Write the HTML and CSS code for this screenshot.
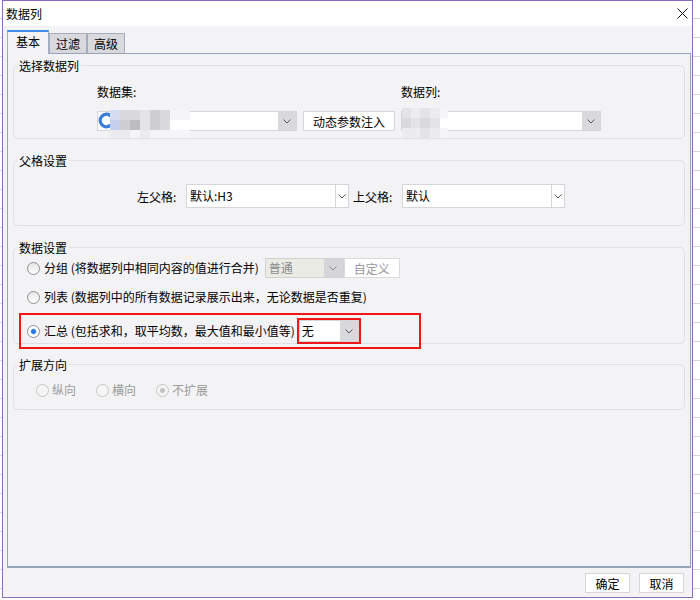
FILE: index.html
```html
<!DOCTYPE html>
<html lang="zh">
<head>
    <meta charset="UTF-8">
    <title>数据列</title>
    <link rel="stylesheet" href="styles.css">
</head>
<body>
    <div class="dialog">
        <div class="titlebar">
            <span class="title">数据列</span>
            <svg class="close" width="11" height="11" viewBox="0 0 11 11"><path d="M0.5 0.5 L10.5 10.5 M10.5 0.5 L0.5 10.5" stroke="#111" stroke-width="1" fill="none"/></svg>
        </div>

        <div class="dialog-body">
            <div class="tabs">
                <span class="tab tab-active">基本</span>
                <span class="tab">过滤</span>
                <span class="tab">高级</span>
            </div>

            <div class="panel">
                <!-- 选择数据列 -->
                <div class="group group-first">
                    <div class="group-title">选择数据列</div>
                    <div class="ds-fields">
                        <div class="ds-col ds-col-main">
                            <div class="field-label">数据集:</div>
                            <div class="field-row">
                                <div class="combo combo-ds">
                                    <svg class="ds-icon" width="13" height="17" viewBox="0 0 13 17"><path d="M12.6 3.9 A6.2 6.2 0 1 0 12.6 13.1" stroke="#3b7ddd" stroke-width="3.4" fill="none"/></svg>
                                    <span class="mosaic mosaic-ds">
                                        <i class="px-a"></i><i class="px-c"></i><i class="px-c"></i><i class="px-e"></i><i class="px-i"></i><i class="px-c"></i><i class="px-f"></i><i class="px-f"></i>
                                        <i class="px-b"></i><i class="px-i"></i><i class="px-d"></i><i class="px-e"></i><i class="px-i"></i><i class="px-c"></i><i class="px-g"></i><i class="px-g"></i>
                                        <i class="px-h"></i><i class="px-h"></i><i class="px-f"></i><i class="px-h"></i><i class="px-f"></i><i class="px-f"></i><i class="px-f"></i><i class="px-f"></i>
                                    </span>
                                    <span class="combo-text"></span>
                                    <span class="combo-arrow"><svg width="8" height="5" viewBox="0 0 8 5"><path d="M0.5 0.5 L4 4 L7.5 0.5" stroke="#555" fill="none"/></svg></span>
                                </div>
                                <button class="btn btn-param">动态参数注入</button>
                            </div>
                        </div>
                        <div class="ds-col">
                            <div class="field-label">数据列:</div>
                            <div class="combo combo-ds">
                                <span class="mosaic mosaic-col">
                                    <i class="px-e"></i><i class="px-h"></i><i class="px-e"></i><i class="px-h"></i><i class="px-f"></i>
                                    <i class="px-c"></i><i class="px-e"></i><i class="px-c"></i><i class="px-e"></i><i class="px-g"></i>
                                    <i class="px-h"></i><i class="px-h"></i><i class="px-e"></i><i class="px-h"></i><i class="px-f"></i>
                                </span>
                                <span class="combo-text"></span>
                                <span class="combo-arrow"><svg width="8" height="5" viewBox="0 0 8 5"><path d="M0.5 0.5 L4 4 L7.5 0.5" stroke="#555" fill="none"/></svg></span>
                            </div>
                        </div>
                    </div>
                </div>

                <!-- 父格设置 -->
                <div class="group group-next">
                    <div class="group-title">父格设置</div>
                    <div class="parent-row">
                        <span class="parent-label">左父格:</span>
                        <div class="combo combo-parent">
                            <span class="combo-text">默认:H3</span>
                            <span class="combo-arrow arrow-plain"><svg width="8" height="5" viewBox="0 0 8 5"><path d="M0.5 0.5 L4 4 L7.5 0.5" stroke="#555" fill="none"/></svg></span>
                        </div>
                        <span class="parent-label parent-label-second">上父格:</span>
                        <div class="combo combo-parent">
                            <span class="combo-text">默认</span>
                            <span class="combo-arrow arrow-plain"><svg width="8" height="5" viewBox="0 0 8 5"><path d="M0.5 0.5 L4 4 L7.5 0.5" stroke="#555" fill="none"/></svg></span>
                        </div>
                    </div>
                </div>

                <!-- 数据设置 -->
                <div class="group group-next">
                    <div class="group-title">数据设置</div>
                    <div class="opt opt-group">
                        <span class="radio"></span>
                        <span class="opt-text">分组 (将数据列中相同内容的值进行合并)</span>
                        <div class="combo combo-mode">
                            <span class="combo-text">普通</span>
                            <span class="combo-arrow"><svg width="8" height="5" viewBox="0 0 8 5"><path d="M0.5 0.5 L4 4 L7.5 0.5" stroke="#888" fill="none"/></svg></span>
                        </div>
                        <button class="btn btn-custom">自定义</button>
                    </div>
                    <div class="opt opt-list">
                        <span class="radio"></span>
                        <span class="opt-text">列表 (数据列中的所有数据记录展示出来，无论数据是否重复)</span>
                    </div>
                    <div class="opt opt-sum">
                        <span class="radio radio-on"></span>
                        <span class="opt-text">汇总 (包括求和，取平均数，最大值和最小值等)</span>
                        <div class="sum-mark">
                            <div class="combo combo-sum">
                                <span class="combo-text">无</span>
                                <span class="combo-arrow"><svg width="8" height="5" viewBox="0 0 8 5"><path d="M0.5 0.5 L4 4 L7.5 0.5" stroke="#555" fill="none"/></svg></span>
                            </div>
                        </div>
                    </div>
                </div>

                <!-- 扩展方向 -->
                <div class="group group-last">
                    <div class="group-title">扩展方向</div>
                    <div class="ext-row">
                        <span class="ext-item"><span class="radio radio-dis"></span>纵向</span>
                        <span class="ext-item"><span class="radio radio-dis"></span>横向</span>
                        <span class="ext-item"><span class="radio radio-dis radio-dis-on"></span>不扩展</span>
                    </div>
                </div>
            </div>

            <div class="footer">
                <button class="btn btn-foot">确定</button>
                <button class="btn btn-foot">取消</button>
            </div>
        </div>
    </div>
</body>
</html>
```

FILE: styles.css
```css
/* General */
* {
    box-sizing: border-box;
}

body {
    margin: 0;
    font-family: "Noto Sans CJK SC", "Microsoft YaHei", sans-serif;
    font-size: 12px;
    color: #000;
    background: #fff repeating-linear-gradient(to bottom, #fff 0 18px, #d6d6d6 18px 19px);
}

.dialog {
    margin-left: 2px;
    width: 691px;
    height: 598px;
    border: 1px solid #8a6cbd;  /* purple frame */
    background-color: #f3f3f6;
    display: flex;
    flex-direction: column;
}

/* Title bar */
.titlebar {
    height: 25px;
    flex: none;
    background-color: #fff;
    display: flex;
    align-items: center;
    justify-content: space-between;
    padding: 0 4px 0 3px;
}

.title {
    line-height: 16px;
}

/* Body and tabs */
.dialog-body {
    flex: 1;
    padding: 4px 0 0 4px;
}

.tabs {
    display: flex;
    align-items: flex-end;
    height: 23px;
    position: relative;
    z-index: 1;
}

.tab {
    height: 20px;
    padding: 0 6px;
    border: 1px solid #a3adbf;
    border-bottom: none;
    background-color: #d8d8dd;
    line-height: 19px;
}

.tab-active {
    height: 24px;
    margin-bottom: -1px;
    padding: 0 8px;
    border-top: 2px solid #3d8bea;  /* blue marker */
    background-color: #f3f3f6;
    line-height: 20px;
}

.panel {
    width: 684px;
    height: 515px;
    border: 1px solid #95a4b8;
    border-bottom-width: 2px;
    background-color: #f3f3f6;
    padding: 0 5px;
}

/* Group boxes */
.group {
    border: 1px solid #dfdfe4;
    border-radius: 5px;
}

.group-first {
    margin-top: 11px;
}

.group-next {
    margin-top: 21px;
}

.group-last {
    margin-top: 20px;
}

.group-title {
    width: fit-content;
    margin: -7px 0 0 3px;
    padding: 0 2px;
    line-height: 14px;
    background-color: #f3f3f6;
}

/* Combo boxes */
.combo {
    position: relative;
    display: flex;
    height: 20px;
    background-color: #fff;
    border: 1px solid #d6d6da;
}

.combo-text {
    flex: 1;
    padding-left: 3px;
    line-height: 18px;
    white-space: nowrap;
}

.combo-arrow {
    width: 18px;
    flex: none;
    background-color: #d9d9dd;
    display: flex;
    align-items: center;
    justify-content: center;
}

.arrow-plain {
    width: 13px;
    background-color: #fff;
    border-left: 1px solid #d6d6da;
}

.btn {
    font: inherit;
    color: #000;
    height: 20px;
    padding: 0;
    background-color: #fff;
    border: 1px solid #d6d6da;
    border-radius: 0;
}

/* 选择数据列 */
.ds-fields {
    display: flex;
    margin-top: 12px;
    padding: 0 0 7px 83px;
}

.ds-col {
    display: flex;
    flex-direction: column;
    gap: 12px;
}

.ds-col-main {
    width: 304px;
}

.field-label {
    line-height: 14px;
}

.field-row {
    display: flex;
}

.combo-ds {
    width: 200px;
}

.btn-param {
    width: 92px;
    margin-left: 6px;
}

.ds-icon {
    position: absolute;
    left: 0;
    top: 0;
}

/* blurred values */
.mosaic {
    position: absolute;
    display: grid;
    grid-template-rows: 10px 10px 8px;
}

.mosaic-ds {
    left: 12px;
    top: -2px;
    grid-template-columns: repeat(8, 10px);
}

.mosaic-col {
    left: 0;
    top: -4px;
    grid-template-rows: 10px 10px 10px;
    grid-template-columns: 9px 9px 10px 10px 8px;
}

.mosaic i { display: block; }
.px-a { background-color: #d5dbf1; }
.px-b { background-color: #c6d0ee; }
.px-c { background-color: #dadadd; }
.px-d { background-color: #bdbdbf; }
.px-e { background-color: #e4e4e6; }
.px-f { background-color: #f5f5f7; }
.px-g { background-color: #fff; }
.px-h { background-color: #ececf0; }
.px-i { background-color: #cfcfd1; }

/* 父格设置 */
.parent-row {
    display: flex;
    align-items: center;
    margin-top: 16px;
    padding: 0 0 17px 123px;
}

.parent-label {
    width: 49px;
}

.parent-label-second {
    margin-left: 4px;
}

.combo-parent {
    width: 163px;
    height: 24px;
}

.combo-parent .combo-text {
    line-height: 22px;
}

/* 数据设置 */
.opt {
    display: flex;
    align-items: center;
    width: 402px;
    height: 24px;
    margin-left: 5px;
    padding-left: 6px;
    border: 2px solid transparent;
}

.opt-group {
    margin-top: 1px;
}

.opt-list {
    margin-top: 5px;
}

.opt-sum {
    height: 36px;
    margin-top: 4px;
    margin-bottom: -6px;
    border-color: #f31616;  /* highlight */
}

.radio {
    width: 13px;
    height: 13px;
    flex: none;
    margin-right: 4px;
    border-radius: 50%;
    border: 1px solid #8e8f90;
    background: linear-gradient(#e6e6e6, #fff);
}

.radio-on {
    background: radial-gradient(circle, #2c78e4 0 2px, #a9c8f2 2.6px, #fff 3.4px);
}

.opt-text {
    white-space: nowrap;
    line-height: 16px;
}

.combo-mode {
    width: 79px;
    margin-left: 6px;
    background-color: #ebebe6;
    border-color: #d2d2ce;
    color: #8a8a8a;
}

.combo-mode .combo-arrow {
    width: 19px;
    background-color: #d6d6da;
}

.btn-custom {
    width: 56px;
    color: #999;
    border-color: #dadada;
}

.sum-mark {
    margin-left: 2px;
    border: 2px solid #f31616;
}

.combo-sum {
    width: 60px;
    height: 22px;
}

.combo-sum .combo-text {
    line-height: 20px;
    padding-left: 2px;
}

/* 扩展方向 */
.ext-row {
    display: flex;
    align-items: center;
    gap: 20px;
    height: 16px;
    margin: 10px 0 11px;
    padding-left: 22px;
}

.ext-item {
    display: flex;
    align-items: center;
    color: #9a9a9a;
    line-height: 16px;
}

.radio-dis {
    margin-right: 3px;
    border-color: #c6c6be;
    background: #f5f5f5;
}

.radio-dis-on {
    background: radial-gradient(circle, #c2c2c2 0 2px, #f5f5f5 3px);
}

/* Footer buttons */
.footer {
    display: flex;
    justify-content: flex-end;
    gap: 9px;
    margin-top: 5px;
    padding-right: 8px;
}

.btn-foot {
    width: 45px;
    border-color: #d7d7d7;
}
```
